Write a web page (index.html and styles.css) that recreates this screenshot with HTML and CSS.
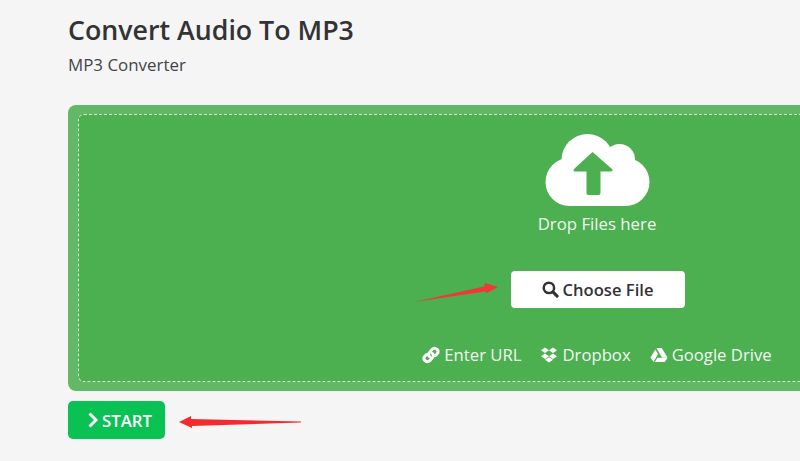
FILE: index.html
```html
<!DOCTYPE html>
<html lang="en">
<head>
<meta charset="utf-8">
<title>Convert Audio To MP3</title>
<link rel="stylesheet" href="styles.css">
</head>
<body>
<main class="page">
  <h1 class="title">Convert Audio To MP3</h1>
  <p class="subtitle">MP3 Converter</p>
  <section class="panel">
    <div class="dropzone">
      <svg class="cloud" viewBox="0 0 104 72" aria-hidden="true">
        <g fill="#fff">
          <circle cx="42" cy="26" r="26"/>
          <circle cx="74" cy="25.500" r="15.500"/>
          <circle cx="24" cy="48" r="24"/>
          <circle cx="80" cy="48" r="24"/>
          <rect x="24" y="24" width="56" height="48"/>
        </g>
        <path fill="#4caf50" d="M47 18L66.500 35Q68 37 65.500 37.500L55 37.500L55 59Q55 61 53 61L43 61Q41 61 41 59L41 37.500L29.500 37.500Q27 37 28.500 35Z"/>
      </svg>
      <p class="drop-text">Drop Files here</p>
      <button class="choose" type="button">
        <svg class="search" viewBox="0 0 18 18" aria-hidden="true">
          <circle cx="7.300" cy="7.300" r="5.500" fill="none" stroke="#333" stroke-width="2.600"/>
          <path d="M11.500 11.500L16 16" stroke="#333" stroke-width="3.200" stroke-linecap="round"/>
        </svg>
        <span>Choose File</span>
      </button>
      <div class="sources">
        <a class="source">
          <svg class="src-icon" viewBox="0 0 18 18" aria-hidden="true">
            <path fill="none" stroke="#fff" stroke-width="3" stroke-linecap="round" d="M7.500 10.500C6 9 6.500 7.500 7.500 6.500L10 3.500C11.500 2 13.500 2 15 3.300C16.300 4.800 16.300 6.800 15 8L13.500 9.500M10.500 7.500C12 9 11.500 10.500 10.500 11.500L8 14.500C6.500 16 4.500 16 3 14.700C1.700 13.200 1.700 11.200 3 10L4.500 8.500"/>
          </svg>
          <span>Enter URL</span>
        </a>
        <a class="source">
          <svg class="src-icon wide" viewBox="0 0 18 16" aria-hidden="true">
            <path fill="#fff" d="M5 0.500L9 3.200L5 6L1 3.200ZM13 0.500L17 3.200L13 6L9 3.200ZM5 6.500L9 9.300L5 12L1 9.300ZM13 6.500L17 9.300L13 12L9 9.300ZM5 12.800L9 10.200L13 12.800L9 15.500Z"/>
          </svg>
          <span>Dropbox</span>
        </a>
        <a class="source">
          <svg class="src-icon wide" viewBox="0 0 18 16" aria-hidden="true">
            <path fill="#fff" d="M6.300 1H11.700L17.500 10.500H12ZM5.300 2.500L8 7L3.500 15L0.500 10.500ZM4.800 15L7.500 10.800H17.500L14.800 15Z"/>
          </svg>
          <span>Google Drive</span>
        </a>
      </div>
    </div>
  </section>
  <button class="start" type="button">
    <svg class="chevron" viewBox="0 0 11 16" aria-hidden="true">
      <path d="M2.500 1.500L9 8L2.500 14.500" fill="none" stroke="#fff" stroke-width="3"/>
    </svg>
    <span>START</span>
  </button>
</main>
<svg class="annot annot-one" viewBox="0 0 86 20" aria-hidden="true">
  <path fill="#f0383a" d="M0 20L70 4.500L71 1L84 5L73 11L71 9.500Z"/>
</svg>
<svg class="annot annot-two" viewBox="0 0 124 16" aria-hidden="true">
  <path fill="#f32b2f" d="M0 8L12 2L12 5L122 7.600L122 8.400L13 12L13 14Z"/>
</svg>
</body>
</html>
```

FILE: styles.css
```css
html, body {
  margin: 0;
  padding: 0;
  height: 461px;
  overflow: hidden;
  background: #f5f5f6;
}

body {
  position: relative;
  font-family: "Open Sans", "Liberation Sans", sans-serif;
  color: #333;
}

.page {
  width: 1058px;
  margin-left: 68px;
  padding-top: 12px;
}

.title {
  margin: 0;
  font-size: 26.750px;
  line-height: 36px;
  font-weight: 600;
  color: #333;
}

.subtitle {
  margin: 5px 0 0;
  font-size: 16.900px;
  line-height: 23px;
  color: #444;
}

.panel {
  margin-top: 29px;
  height: 286px;
  box-sizing: border-box;
  padding: 9px 10px;
  background: #62b866;
  border-radius: 8px;
}

.dropzone {
  height: 100%;
  box-sizing: border-box;
  background: #4caf50;
  border: 1px dashed #d5ecd6;
  border-radius: 6px;
  display: flex;
  flex-direction: column;
  align-items: center;
  padding-top: 19px;
  color: #fff;
}

.cloud {
  width: 105px;
  height: 72px;
  display: block;
}

.drop-text {
  margin: 6px 0 0;
  font-size: 16.800px;
  line-height: 23px;
  color: #f0f8f0;
}

.choose {
  margin: 36px 0 0 1px;
  width: 174px;
  height: 37px;
  display: flex;
  align-items: center;
  justify-content: center;
  gap: 4px;
  border: 0;
  border-radius: 4px;
  background: #fff;
  font: 600 16.600px "Open Sans", sans-serif;
  color: #333;
}

.search {
  width: 17px;
  height: 17px;
}

.sources {
  margin-top: 35px;
  display: flex;
  gap: 19px;
  font-size: 16.700px;
  line-height: 23px;
  color: #f0f8f0;
}

.source {
  display: flex;
  align-items: center;
  gap: 4px;
}

.src-icon {
  width: 18px;
  height: 18px;
}

.src-icon.wide {
  height: 16px;
}

.start {
  margin-top: 10px;
  width: 97px;
  height: 38px;
  padding: 0 0 0 19px;
  display: flex;
  align-items: center;
  justify-content: flex-start;
  gap: 4px;
  border: 0;
  border-radius: 5px;
  background: #0ac254;
  color: #fff;
  font: 600 16.800px "Open Sans", sans-serif;
}

.chevron {
  width: 11px;
  height: 16px;
}

.annot {
  position: absolute;
  display: block;
}

.annot-one {
  left: 414px;
  top: 282px;
  width: 86px;
  height: 20px;
}

.annot-two {
  left: 179px;
  top: 414px;
  width: 124px;
  height: 16px;
}
```
